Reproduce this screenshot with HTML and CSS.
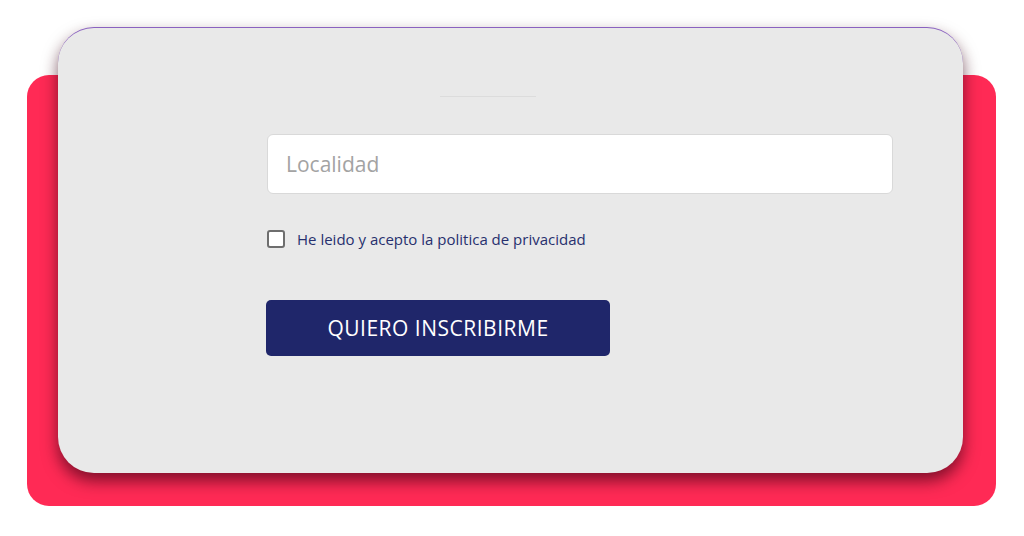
FILE: index.html
```html
<!DOCTYPE html>
<html lang="es">
<head>
  <meta charset="UTF-8">
  <title>Inscripción</title>
  <link rel="stylesheet" href="styles.css">
</head>
<body>

<div class="stage">
  <!-- Tarjeta del formulario -->
  <div class="card">
    <div class="divider"></div>

    <form class="signup" onsubmit="return false">
      <input type="text" class="field" placeholder="Localidad">

      <label class="check">
        <input type="checkbox">
        <span>He leido y acepto la politica de privacidad</span>
      </label>

      <button type="submit" class="btn">QUIERO INSCRIBIRME</button>
    </form>
  </div>
</div>

</body>
</html>
```

FILE: styles.css
```css
* {
  box-sizing: border-box;
}

body {
  margin: 0;
  background: #fff;
  font-family: "Open Sans", "Noto Sans", sans-serif;
}

/* Bloque rojo de fondo */
.stage {
  margin: 75px 0 0 27px;
  width: 969px;
  height: 431px;
  background: #ff2a55;
  border-radius: 22px;
  padding: 0 33px 0 31px;
}

/* Tarjeta gris */
.card {
  position: relative;
  top: -48px;
  height: 446px;
  background: #e9e9e9;
  border-radius: 36px;
  border-top: 1px solid #8a62c0;
  box-shadow: 0 8px 16px rgba(60, 0, 20, 0.65);
  padding: 68px 0 0 209px;
}

.divider {
  width: 96px;
  height: 1px;
  margin-left: 173px;
  background: #dcdcdc;
}

.signup {
  margin-top: 37px;
  width: 626px;
}

.field {
  display: block;
  width: 100%;
  height: 60px;
  padding: 0 18px;
  border: 1px solid #d9d9d9;
  border-radius: 6px;
  background: #fff;
  font-family: inherit;
  font-size: 21px;
  color: #333;
  outline: none;
}

.field::placeholder {
  color: #a3a3a3;
}

.check {
  display: flex;
  align-items: center;
  height: 20px;
  margin-top: 35px;
  font-size: 15px;
  letter-spacing: 0;
  color: #27306e;
}

.check input {
  appearance: none;
  flex: none;
  width: 18px;
  height: 18px;
  margin: 0 12px 0 0;
  border: 2px solid #6e6e6e;
  border-radius: 3px;
  background: #fff;
}

.btn {
  display: block;
  margin-top: 51px;
  margin-left: -1px;
  width: 344px;
  height: 56px;
  border: none;
  border-radius: 5px;
  background: #1f266a;
  color: #fff;
  font-family: inherit;
  font-size: 21px;
  letter-spacing: 0.5px;
  cursor: pointer;
}
```
